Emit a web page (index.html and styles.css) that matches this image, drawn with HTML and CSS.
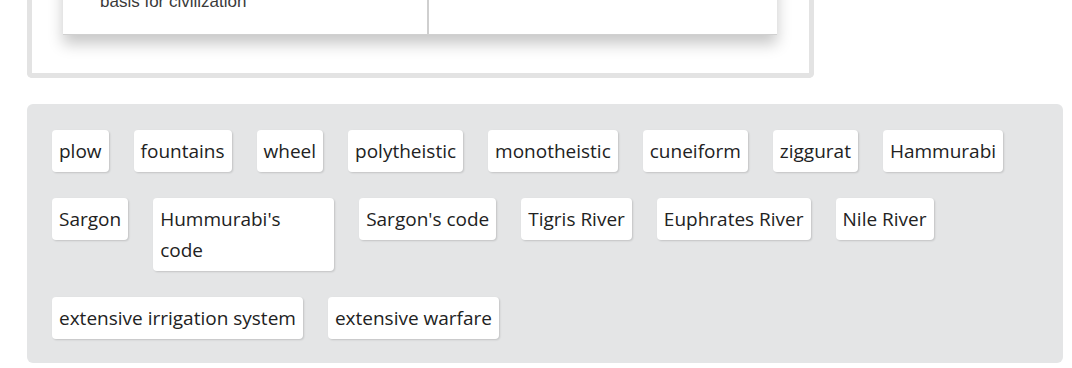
FILE: index.html
```html
<!DOCTYPE html>
<html lang="en">
<head>
    <meta charset="UTF-8">
    <meta name="viewport" content="width=device-width, initial-scale=1.0">
    <link rel="stylesheet" href="styles.css">
    <title>Ancient Civilizations - Drag and Drop</title>
</head>
<body>
    <main class="page">
        <section class="answer-panel">
            <div class="table-image">
                <div class="cell">
                    <p class="cell-text">Rivers gave water and soil, the<br>basis for civilization</p>
                </div>
                <div class="cell"></div>
            </div>
        </section>

        <section class="word-bank">
            <span class="chip">plow</span>
            <span class="chip">fountains</span>
            <span class="chip">wheel</span>
            <span class="chip">polytheistic</span>
            <span class="chip">monotheistic</span>
            <span class="chip">cuneiform</span>
            <span class="chip">ziggurat</span>
            <span class="chip">Hammurabi</span>
            <span class="chip">Sargon</span>
            <span class="chip chip-wide">Hummurabi's<br>code</span>
            <span class="chip">Sargon's code</span>
            <span class="chip">Tigris River</span>
            <span class="chip">Euphrates River</span>
            <span class="chip">Nile River</span>
            <span class="chip">extensive irrigation system</span>
            <span class="chip">extensive warfare</span>
        </section>
    </main>
</body>
</html>
```

FILE: styles.css
```css
body {
    margin: 0;
    padding: 0;
    background-color: white;
    font-family: "Open Sans", Arial, sans-serif;
    color: #222;
    overflow: hidden;
}

.page {
    padding: 0 9px 0 27px;
}

.answer-panel {
    width: 787px;
    box-sizing: border-box;
    margin-top: -100px;
    padding: 0 32px 38px 31px;
    border: 5px solid #e3e3e3;
    border-top: none;
    border-radius: 0 0 5px 5px;
    background-color: white;
}

.table-image {
    display: grid;
    grid-template-columns: 364px 1fr;
    height: 134px;
    background-color: white;
    border-bottom: 1px solid #d0d0d0;
    box-shadow: 0 9px 14px rgba(0, 0, 0, 0.22);
}

.cell {
    display: flex;
    align-items: flex-end;
    padding: 0 36px 22px 37px;
}

.cell + .cell {
    border-left: 2px solid #cfcfcf;
}

.cell-text {
    margin: 0;
    font-family: "Liberation Sans", Arial, sans-serif;
    font-size: 17px;
    line-height: 20px;
    color: #3a3a3a;
}

.word-bank {
    display: flex;
    flex-wrap: wrap;
    align-items: flex-start;
    gap: 26px 25px;
    margin-top: 26px;
    padding: 26px 25px 24px;
    background-color: #e4e5e6;
    border-radius: 6px;
}

.chip {
    display: block;
    padding: 6px 7px 5px;
    font-size: 19px;
    line-height: 31px;
    background-color: white;
    border-radius: 4px;
    box-shadow: 1px 1px 2px rgba(0, 0, 0, 0.15);
    white-space: nowrap;
}

.chip-wide {
    width: 181px;
    box-sizing: border-box;
}
```
